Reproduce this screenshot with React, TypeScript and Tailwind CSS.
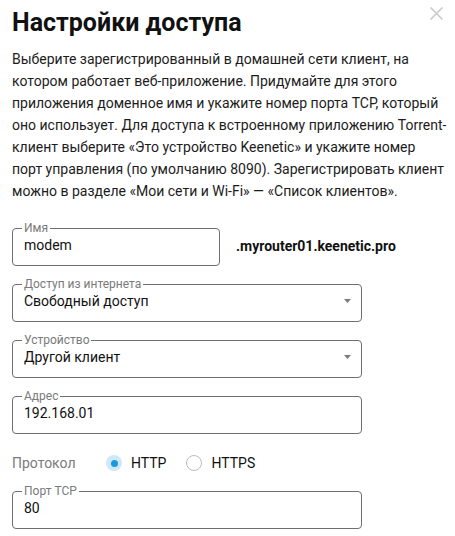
import React from "react";

const font = { fontFamily: "Roboto, 'Noto Sans', Arial, sans-serif" };

function Field({
  label,
  value,
  select,
  wide = true,
}: {
  label: string;
  value: string;
  select?: boolean;
  wide?: boolean;
}) {
  return (
    <fieldset
      className={`border border-[#6e6e6e] rounded-[4px] pl-[11px] pr-[9px] pb-[10px] ${
        wide ? "w-[350px]" : "w-[208px]"
      }`}
    >
      <legend className="-ml-[2px] px-[2px] text-[12px] leading-[14px] text-[#7a7a7a]">
        {label}
      </legend>
      <div className="flex items-center justify-between h-[20px]">
        <span className="text-[14px] leading-[20px] text-[#111]">{value}</span>
        {select && (
          <svg width="7" height="4" viewBox="0 0 7 4" className="mr-[1px]">
            <path d="M0 0h7L3.5 4z" fill="#7a7a7a" />
          </svg>
        )}
      </div>
    </fieldset>
  );
}

function Radio({ checked, label }: { checked?: boolean; label: string }) {
  return (
    <label className="flex items-center gap-[9px]">
      {checked ? (
        <span className="w-[16px] h-[16px] rounded-full bg-[#cfe8f7] flex items-center justify-center">
          <span className="w-[7px] h-[7px] rounded-full bg-[#1a98dc]" />
        </span>
      ) : (
        <span className="w-[16px] h-[16px] rounded-full border border-[#bdbdbd]" />
      )}
      <span className="text-[14px] leading-[20px] text-[#111]">{label}</span>
    </label>
  );
}

export default function App() {
  return (
    <div className="w-[455px] h-[536px] bg-white relative overflow-hidden pl-3 pr-1" style={font}>
      <button className="absolute right-[12px] top-[7px] text-[#c8c8c8]">
        <svg width="13" height="13" viewBox="0 0 13 13">
          <path d="M0.5 0.5l12 12M12.5 0.5l-12 12" stroke="currentColor" strokeWidth="1.5" />
        </svg>
      </button>

      <h1 className="pt-[8px] text-[25px] leading-[30px] font-bold text-[#111]">
        Настройки доступа
      </h1>

      <p className="mt-[10px] text-[14px] leading-[22px] text-[#1c1c1c] whitespace-nowrap">
        Выберите зарегистрированный в домашней сети клиент, на
        <br />
        котором работает веб-приложение. Придумайте для этого
        <br />
        приложения доменное имя и укажите номер порта TCP, который
        <br />
        оно использует. Для доступа к встроенному приложению Torrent-
        <br />
        клиент выберите «Это устройство Keenetic» и укажите номер
        <br />
        порт управления (по умолчанию 8090). Зарегистрировать клиент
        <br />
        можно в разделе «Мои сети и Wi-Fi» — «Список клиентов».
      </p>

      <div className="mt-[19px] flex flex-col gap-[11px]">
        <div className="flex items-center gap-[16px]">
          <Field label="Имя" value="modem" wide={false} />
          <span className="text-[14px] font-bold text-[#111] mt-[6px]">
            .myrouter01.keenetic.pro
          </span>
        </div>
        <Field label="Доступ из интернета" value="Свободный доступ" select />
        <Field label="Устройство" value="Другой клиент" select />
        <Field label="Адрес" value="192.168.01" />
      </div>

      <div className="mt-[19px] mb-[11px] h-[20px] flex items-center">
        <span className="w-[94px] text-[14px] leading-[20px] text-[#7a7a7a]">Протокол</span>
        <div className="flex items-center gap-[20px]">
          <Radio checked label="HTTP" />
          <Radio label="HTTPS" />
        </div>
      </div>

      <Field label="Порт TCP" value="80" />
    </div>
  );
}
